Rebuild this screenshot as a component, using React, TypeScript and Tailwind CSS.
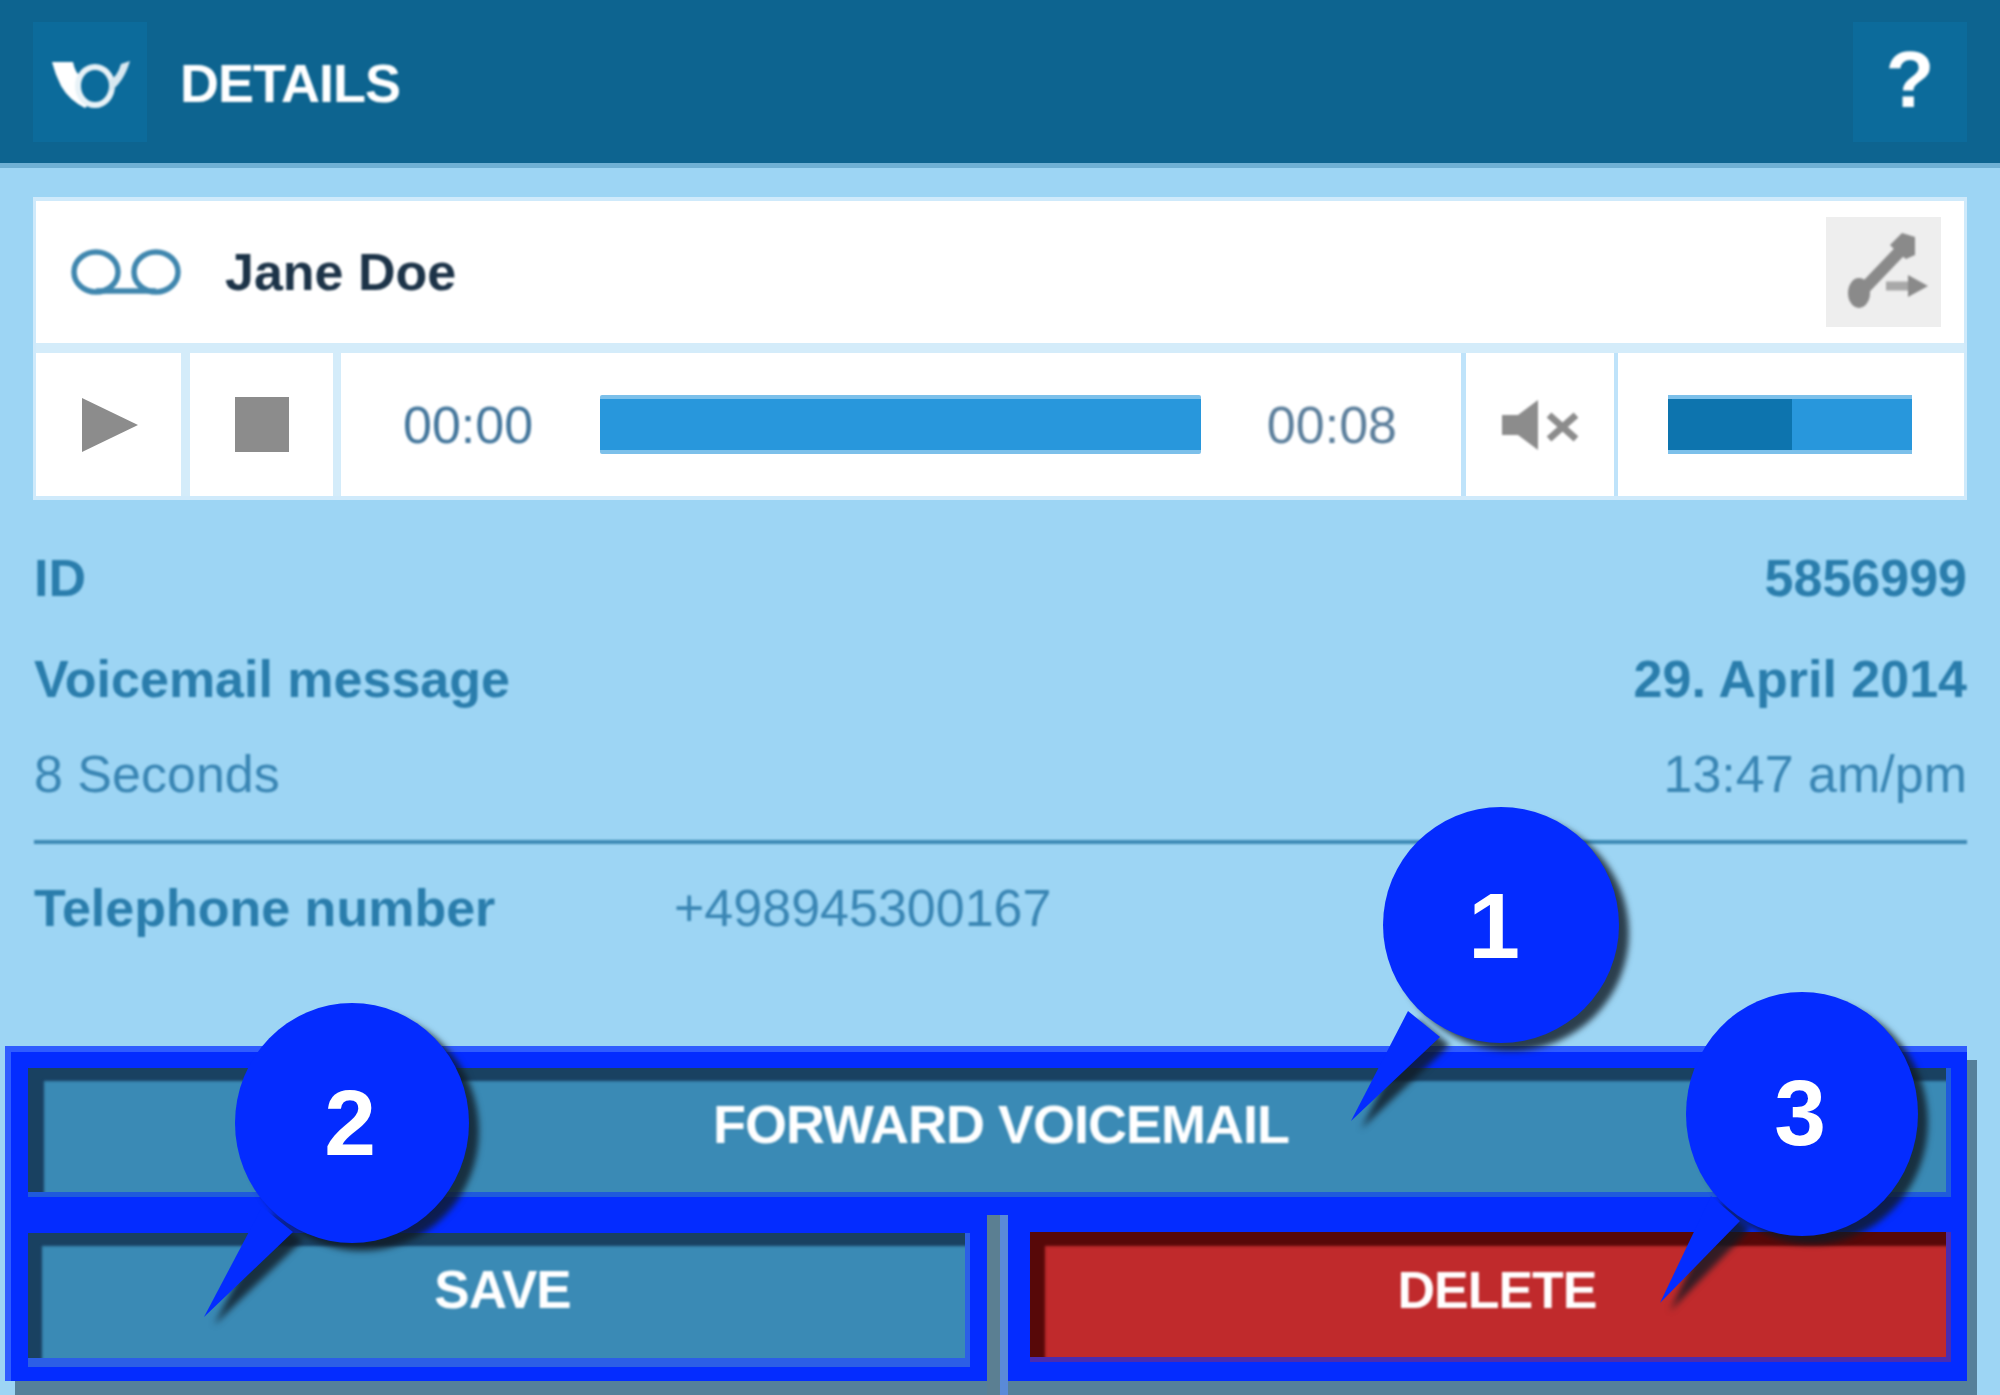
import React from 'react';

const Callout: React.FC<{ className: string; cx: number; cy: number; rx: number; ry: number; tail: string; label: string; numX: number; numY: number }> = ({ className, cx, cy, rx, ry, tail, label, numX, numY }) => (
  <svg className={`absolute ${className}`} width="320" height="350" viewBox="0 0 320 350">
    <g className="drop-shadow-[10px_8px_3px_rgba(15,25,35,0.8)]">
      <ellipse cx={cx} cy={cy} rx={rx} ry={ry} fill="#042cff" />
      <polygon points={tail} fill="#042cff" />
    </g>
    <text x={numX} y={numY} textAnchor="middle" fontSize="93" fontWeight="700" fill="#ffffff" className="blur-[0.7px]">
      {label}
    </text>
  </svg>
);

export default function App() {
  return (
    <div className="relative w-[2000px] h-[1395px] overflow-hidden bg-[#9dd5f4] font-['Liberation_Sans',Arial,sans-serif]">
      {/* Header */}
      <div className="h-[168px] border-b-[5px] border-[#6fb0d4] bg-[#0d6490] px-[33px] pt-[22px] flex justify-between items-start">
        <div className="flex items-start">
          <div className="w-[114px] h-[120px] bg-[#0c6b9b] flex items-center justify-center">
            <svg width="100" height="80" viewBox="0 0 100 80" className="ml-[5px] blur-[0.8px]" fill="#ffffff">
              <path d="M9 20 H30 Q32 30 37 34 L34 48 Q36 56 46 62 L42 66 Q26 58 18 44 Q12 32 9 20Z" />
              <ellipse cx="52" cy="44" rx="17" ry="19" fill="none" stroke="#e8f2f7" strokeWidth="6" />
              <path d="M66 50 Q80 42 87 19 L78 22 Q74 36 66 38Z" fill="#d8e8f0" />
            </svg>
          </div>
          <span className="ml-[33px] mt-[31px] text-[54px] leading-[60px] font-bold tracking-[-1px] text-white blur-[0.8px]">DETAILS</span>
        </div>
        <div className="w-[114px] h-[120px] bg-[#0c6b9b] flex items-center justify-center">
          <span className="-mt-[4px] text-[80px] leading-[90px] font-bold text-white blur-[0.8px]">?</span>
        </div>
      </div>

      {/* Player card */}
      <div className="mx-[33px] mt-[29px] border-t-[4px] border-x-[3px] border-b-[4px] border-[#cfeafb] bg-[#d4ecfa]">
        <div className="h-[142px] bg-white flex items-center justify-between pl-[35px] pr-[23px]">
          <div className="flex items-center">
            <svg width="110" height="46" viewBox="0 0 110 46" className="blur-[0.8px]" fill="none" stroke="#3f86ae" strokeWidth="5.5">
              <ellipse cx="25" cy="23" rx="22" ry="20" />
              <ellipse cx="85" cy="23" rx="22" ry="20" />
              <path d="M25 42 H85" />
            </svg>
            <span className="ml-[44px] text-[52px] leading-[60px] font-bold text-[#1c3348] blur-[0.8px]">Jane Doe</span>
          </div>
          <div className="w-[115px] h-[110px] bg-[#eeeeee] flex items-center justify-center">
            <svg width="115" height="110" viewBox="0 0 115 110" className="blur-[0.9px]" fill="none" stroke="#8a8a8a">
              <path d="M34 76 L76 32" strokeWidth="12" />
              <ellipse cx="33" cy="76" rx="11" ry="15" fill="#8a8a8a" stroke="none" />
              <polygon points="64,28 76,16 89,20 89,38 80,42 72,36" fill="#8a8a8a" stroke="none" />
              <path d="M60 69 H86" strokeWidth="9" stroke="#a8a8a8" />
              <polygon points="82,58 102,69 82,80" fill="#8a8a8a" stroke="none" />
            </svg>
          </div>
        </div>
        <div className="mt-[10px] h-[143px] flex bg-white">
          <div className="w-[154px] pl-[2px] border-r-[9px] border-[#d4ecfa] flex items-center justify-center">
            <svg width="60" height="58" viewBox="0 0 60 58" className="blur-[0.6px]"><polygon points="2,2 58,29 2,56" fill="#8c8c8c" /></svg>
          </div>
          <div className="w-[151px] border-r-[8px] border-[#d4ecfa] flex items-center justify-center">
            <div className="w-[54px] h-[55px] bg-[#8c8c8c]" />
          </div>
          <div className="w-[1125px] flex items-center pl-[62px] pr-[64px] justify-between border-r-[5px] border-[#bfe3fa]">
            <span className="text-[52px] leading-[60px] text-[#43769c] blur-[0.8px]">00:00</span>
            <div className="w-[601px] h-[59px] rounded-[2px] bg-[#2897dc] border-y-[4px] border-[#7cc0ea]" />
            <span className="text-[52px] leading-[60px] text-[#5c7f9c] blur-[0.8px]">00:08</span>
          </div>
          <div className="w-[152px] border-r-[4px] border-[#bfe3fa] flex items-center justify-center">
            <svg width="76" height="54" viewBox="0 0 76 54" className="blur-[0.8px]" fill="#8c8c8c">
              <polygon points="0,17 16,17 36,2 36,52 16,37 0,37" />
              <path d="M47 17 L74 41 M74 17 L47 41" stroke="#8c8c8c" strokeWidth="7" />
            </svg>
          </div>
          <div className="flex-1 flex items-center pl-[50px]">
            <div className="w-[244px] h-[59px] flex border-y-[4px] border-[#7cc0ea]">
              <div className="w-[124px] bg-[#0d74ae]" />
              <div className="flex-1 bg-[#2897dc]" />
            </div>
          </div>
        </div>
      </div>

      {/* Details */}
      <div className="ml-[34px] mr-[33px] mt-[48px] text-[52px] leading-[60px] text-[#3a86b4] blur-[0.8px]">
        <div className="flex justify-between font-bold text-[#2a7dac]">
          <span>ID</span>
          <span>5856999</span>
        </div>
        <div className="mt-[41px] flex justify-between font-bold text-[#2a7dac]">
          <span>Voicemail message</span>
          <span>29. April 2014</span>
        </div>
        <div className="mt-[35px] flex justify-between">
          <span>8 Seconds</span>
          <span>13:47 am/pm</span>
        </div>
        <div className="mt-[36px] h-[4px] bg-[#3d8ab5]" />
        <div className="mt-[34px] flex">
          <span className="w-[640px] font-bold text-[#2a7dac]">Telephone number</span>
          <span>+498945300167</span>
        </div>
      </div>

      {/* Highlighted buttons */}
      <div className="absolute left-[5px] top-[1046px] w-[1962px] h-[335px] border-l-[6px] border-t-[6px] border-[#2f5cff] shadow-[10px_14px_0_#55809a]">
        <div className="h-full bg-[#042cff] flex flex-col">
          <div className="ml-[17px] mt-[16px] mr-[16px] h-[129px] pb-[12px] pl-[28px] bg-[#3a8ab5] border-b-[5px] border-r-[5px] border-[#1f5adc] shadow-[inset_16px_13px_3px_rgba(15,40,70,0.75)] flex items-center justify-center text-[54px] font-bold tracking-[-1px] text-white">
            <span className="blur-[0.8px]">FORWARD VOICEMAIL</span>
          </div>
          <div className="mt-[36px] flex flex-1 min-h-0">
            <div className="ml-[17px] w-[942px] h-[134px] pl-[12px] pb-[12px] bg-[#3a8ab5] border-b-[9px] border-r-[5px] border-[#2c5ee6] shadow-[inset_14px_13px_3px_rgba(15,40,70,0.75)] flex items-center justify-center text-[53px] font-bold tracking-[-1px] text-white">
              <span className="blur-[0.8px]">SAVE</span>
            </div>
            <div className="ml-[17px] -mt-[18px] w-[21px] h-[180px] flex">
              <div className="w-[13px] bg-[#5b7f92]" />
              <div className="w-[8px] bg-[#5a8ad8]" />
            </div>
            <div className="ml-[22px] -mt-[1px] w-[921px] h-[130px] pb-[10px] pl-[18px] bg-[#c02a2c] border-b-[5px] border-r-[5px] border-[#4a2cb0] shadow-[inset_15px_14px_3px_rgba(60,0,0,0.8)] flex items-center justify-center text-[52px] font-bold tracking-[-1px] text-white">
              <span className="blur-[0.8px]">DELETE</span>
            </div>
          </div>
        </div>
      </div>

      <Callout className="left-[1340px] top-[800px]" cx={161} cy={125} rx={118} ry={118} tail="68,211 11,321 100,237" label="1" numX={154} numY={158} />
      <Callout className="left-[190px] top-[995px]" cx={162} cy={128} rx={117} ry={120} tail="72,212 14,322 103,237" label="2" numX={160} numY={160} />
      <Callout className="left-[1650px] top-[985px]" cx={152} cy={129} rx={116} ry={122} tail="61,211 10,318 90,236" label="3" numX={150} numY={160} />
    </div>
  );
}
